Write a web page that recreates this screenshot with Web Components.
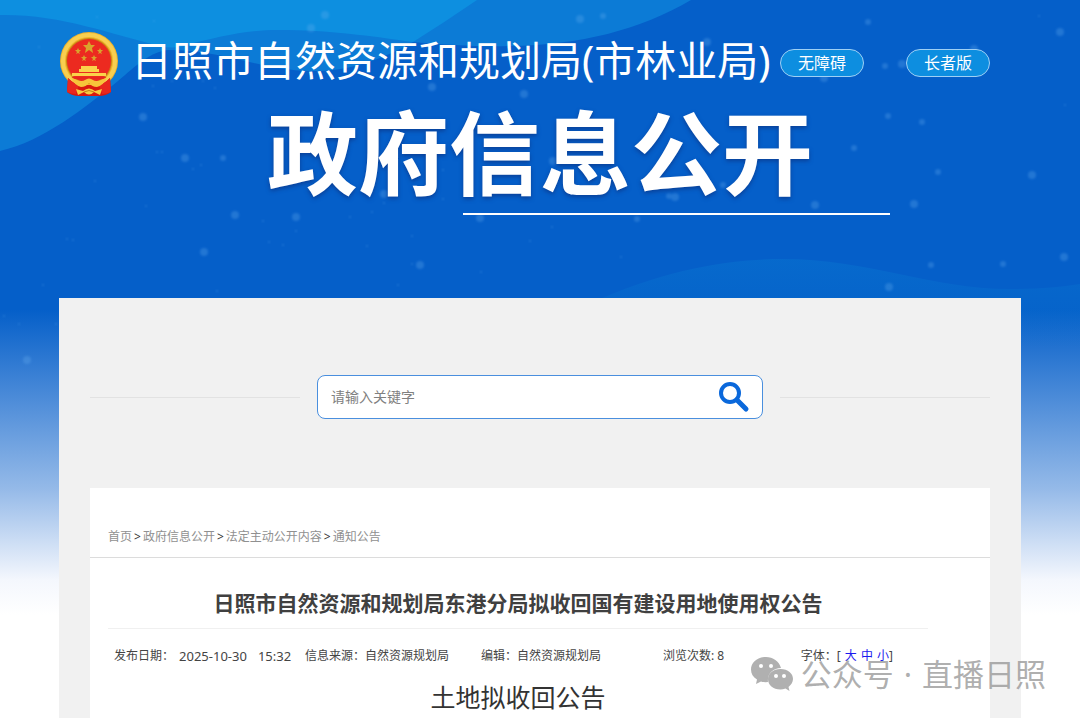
<!DOCTYPE html>
<html lang="zh-CN">
<head>
<meta charset="utf-8">
<meta name="viewport" content="width=device-width, initial-scale=1">
<title>日照市自然资源和规划局 政府信息公开</title>
<style>
  body { margin: 0; font-family: "Noto Sans", "Noto Sans CJK SC", sans-serif; color: #444; }
</style>
</head>
<body>
<gov-page>
  <site-header slot="header">
    <site-emblem slot="logo"></site-emblem>
    <span slot="name">日照市自然资源和规划局(市林业局)</span>
    <pill-button slot="tools">无障碍</pill-button>
    <pill-button slot="tools">长者版</pill-button>
    <span slot="banner">政府信息公开</span>
  </site-header>
  <search-bar></search-bar>
  <article-panel>
    <crumb-trail slot="crumbs"></crumb-trail>
    <span slot="title">日照市自然资源和规划局东港分局拟收回国有建设用地使用权公告</span>
    <article-meta slot="meta"></article-meta>
    <span slot="subtitle">土地拟收回公告</span>
  </article-panel>
  <account-mark slot="mark"></account-mark>
</gov-page>

<script>
function define(name, html, setup) {
  const template = document.createElement('template');
  template.innerHTML = '<style>:host,*{box-sizing:border-box}</style>' + html;
  customElements.define(name, class extends HTMLElement {
    constructor() {
      super();
      this.attachShadow({ mode: 'open' }).append(template.content.cloneNode(true));
      if (setup) setup(this.shadowRoot);
    }
  });
}

/* Backdrop: waves and scattered light specks, as [x, y, radius] */
const specks = [
  [185,158,4],[223,158,3],[143,117,4],[235,215,4],[296,217,4],[204,252,4],[420,265,4],[432,87,4],[524,94,4],
  [311,28,4],[325,15,4],[480,218,4],[384,194,4],[157,152,1],[162,152,1],[193,169,1],[201,165,1],[95,181,1],
  [146,206,1],[263,221,1],[296,231,1],[283,245,1],[269,242,1],[350,217,1],[372,212,1],[384,203,1],[412,236,1],
  [443,170,1],[443,199,1],[67,239,1],[73,240,1],[398,285,1],[217,291,1],[481,272,1],[43,285,1],[153,86,1],
  [215,88,1],[203,81,1],[172,81,1],[530,241,1],[367,246,1],[39,47,1],[97,17,1],[154,21,1],[412,264,1],
  [580,19,4],[603,16,3],[707,42,4],[824,78,4],[868,22,3],[1060,32,4],[974,49,4],[902,64,4],[885,66,3],
  [888,116,3],[922,122,3],[854,148,3],[938,172,3],[1032,175,4],[914,204,4],[815,205,4],[675,197,4],
  [669,196,3],[723,185,3],[637,219,3],[553,161,4],[1064,257,4],[889,287,4],[931,265,3],[1003,264,3],
  [552,227,1],[621,257,1],[1065,105,1],[1039,16,1],[27,360,4],[4,316,1],[19,324,1],[56,324,1]
];
define('wave-backdrop', `
  <style>
    :host { display: block; background: linear-gradient(#055fc9 0, #055fc9 310px, #94b9e8 488px, #f4f7fd 580px, #fff 615px); }
    svg { display: block; width: 100%; height: 400px; }
  </style>
  <svg viewBox="0 0 1080 400" preserveAspectRatio="xMidYMin slice" aria-hidden="true">
    <defs><linearGradient id="w" x1="0" y1="0" x2="0" y2="1">
      <stop offset="0" stop-color="#0a80d4" stop-opacity=".32"/><stop offset="1" stop-color="#0a80d4" stop-opacity="0"/>
    </linearGradient>
    <filter id="b"><feGaussianBlur stdDeviation=".8"/></filter></defs>
    <path fill="#0c7bd6" d="M0 0H691C640 30 580 45 510 46C480 47 450 45 413 42C385 58 350 72 310 71C260 70 225 50 168 50C150 52 137 65 118 81C84 108 44 141 0 151Z"/>
    <path fill="#0d8fe0" d="M0 0H477Q445 22 413 42C370 36 330 30 278 30C245 30 215 38 190 44Q175 50 160 46C110 34 60 14 0 15Z"/>
    <path fill="url(#w)" d="M602 298C680 265 740 259 782 259C870 259 930 289 1010 289C1040 289 1060 287 1080 284V350H602Z"/>
    <g id="s" fill="#6fb4f2" opacity=".27" filter="url(#b)"></g>
  </svg>`, root => {
  root.getElementById('s').innerHTML = specks.map(([x, y, r]) => `<circle cx="${x}" cy="${y}" r="${r}"/>`).join('');
});

define('gov-page', `
  <style>
    :host { display: grid; min-height: 100vh; position: relative; overflow: hidden; }
    wave-backdrop, .page { grid-area: 1 / 1; min-width: 0; }
    .page { position: relative; display: flex; flex-direction: column; padding: 0 59px; }
    main { flex: 1; display: flex; flex-direction: column; background: #f1f1f1; padding: 77px 31px 0; }
    .mark { position: absolute; right: 34px; top: 652px; }
  </style>
  <wave-backdrop></wave-backdrop>
  <div class="page"><slot name="header"></slot><main><slot></slot></main></div>
  <div class="mark"><slot name="mark"></slot></div>`);

define('site-header', `
  <style>
    :host { display: block; height: 298px; color: #fff; padding-top: 31px; }
    .top { display: flex; align-items: center; height: 66px; padding-right: 31px; }
    .name { flex: 1; margin: 0 0 8px 12px; font-size: 41px; line-height: 60px; font-weight: 400; white-space: nowrap; }
    .tools { display: flex; gap: 42px; margin-bottom: 2px; }
    .banner { margin: 0; text-align: center; font-size: 91px; line-height: 112px; font-weight: 700; text-shadow: 0 2px 4px #0a3f96; white-space: nowrap; }
    .rule { height: 2px; width: 427px; max-width: 50%; margin: 4px 0 0 42%; background: #fff; }
  </style>
  <header>
    <div class="top"><slot name="logo"></slot><h1 class="name"><slot name="name"></slot></h1>
      <div class="tools"><slot name="tools"></slot></div></div>
    <h2 class="banner"><slot name="banner"></slot></h2>
    <div class="rule"></div>
  </header>`);

define('pill-button', `
  <style>
    :host { display: block; }
    button { display: block; width: 84px; height: 28px; padding: 0; border: 1px solid #9fd0f5; border-radius: 14px;
      background: #0d8ee0; color: #fff; font: inherit; font-size: 16px; line-height: 26px; cursor: pointer; }
  </style>
  <button type="button"><slot></slot></button>`);

define('site-emblem', `
  <style>:host { display: block; flex: none; } svg { display: block; }</style>
  <svg width="60" height="66" viewBox="0 0 60 66" role="img" aria-label="国徽">
    <circle cx="30" cy="30" r="29" fill="#efb22b"/>
    <circle cx="30" cy="30" r="26" fill="none" stroke="#f8cf50" stroke-width="4"/>
    <circle cx="30" cy="30" r="23" fill="#c98515"/>
    <circle cx="30" cy="30" r="22" fill="#ec2a20"/>
    <g fill="#d9a42c">
      <path d="M30 10L32 14L36 14L33 17L34 22L30 19L26 22L27 17L24 14L28 14Z"/>
      <path d="M19 17l1 2h2l-2 2 1 2-2-1-2 1 1-2-2-2h2zM41 17l1 2h2l-2 2 1 2-2-1-2 1 1-2-2-2h2zM25 24l1 2h2l-2 2 1 2-2-1-2 1 1-2-2-2h2zM35 24l1 2h2l-2 2 1 2-2-1-2 1 1-2-2-2h2z"/>
    </g>
    <path d="M22 35H38V38H40V41H20V38H22ZM13 42H47V45H13Z" fill="#fbd24a"/>
    <path d="M13 46H47V48H13Z" fill="#e8271e"/>
    <path d="M9 47Q15 53 20 54L40 54Q45 53 51 47L52 61Q47 65 40 65H20Q13 65 8 61Z" fill="#d9180f"/>
    <path d="M9 47Q15 53 20 54L17 63Q12 63 8 61ZM51 47Q45 53 40 54L43 63Q48 63 52 61Z" fill="#e8271e"/>
    <path d="M12 46Q22 52 26 49Q30 46 34 49Q38 52 48 46Q45 54 38 56Q33 56 30 52Q27 56 22 56Q15 54 12 46Z" fill="#f7c43a"/>
    <path d="M17 58L24 60Q30 55 36 60L43 58L41 64L35 61Q30 66 25 61L19 64Z" fill="#f7c93f"/>
    <path d="M25 61Q30 58 35 61" fill="none" stroke="#c77d17"/>
  </svg>`);

define('search-bar', `
  <style>
    :host { display: block; }
    form { display: flex; align-items: center; gap: 17px; }
    .line { flex: 1; height: 1px; background: #e2e2e2; }
    .box { display: flex; align-items: center; width: 446px; height: 44px; padding: 0 12px 0 13px;
      background: #fff; border: 1px solid #4a8fde; border-radius: 8px; }
    input { flex: 1; min-width: 0; border: 0; outline: 0; padding: 0; background: none; font: inherit; font-size: 14px; line-height: 20px; color: #333; }
    input::placeholder { color: #808080; opacity: 1; }
    button { border: 0; padding: 0; background: none; width: 34px; height: 36px; cursor: pointer; }
    svg { display: block; }
  </style>
  <form role="search">
    <span class="line"></span>
    <div class="box">
      <input type="text" aria-label="关键字" placeholder="请输入关键字">
      <button type="button" aria-label="搜索"><svg width="34" height="34" viewBox="0 0 34 34" fill="none" stroke="#0a68db">
        <circle cx="14" cy="13" r="9" stroke-width="4"/><path d="M21 20L30 29" stroke-width="5" stroke-linecap="round"/></svg></button>
    </div>
    <span class="line"></span>
  </form>`);

define('article-panel', `
  <style>
    :host { flex: 1; display: block; margin-top: 69px; background: #fff; }
    .crumbs { padding: 40px 16px 11px; border-bottom: 1px solid #dcdcdc; }
    .body { margin: 0 62px 0 18px; }
    h1 { margin: 0; padding: 30px 0 10px; border-bottom: 1px solid #f0f0f0; text-align: center; font-size: 21px; line-height: 30px; font-weight: 700; color: #404040; }
    h2 { margin: 0; text-align: center; font-size: 25px; line-height: 36px; font-weight: 400; color: #333; }
  </style>
  <div class="crumbs"><slot name="crumbs"></slot></div>
  <article class="body">
    <h1><slot name="title"></slot></h1>
    <slot name="meta"></slot>
    <h2><slot name="subtitle"></slot></h2>
  </article>`);

define('crumb-trail', `
  <style>
    :host { display: block; font-size: 12px; line-height: 18px; color: #333; }
    nav { display: flex; }
    a { color: #909090; text-decoration: none; padding: 0 2px; }
  </style>
  <nav aria-label="当前位置"><a href="#">首页</a><span>&gt;</span><a href="#">政府信息公开</a><span>&gt;</span><a href="#">法定主动公开内容</a><span>&gt;</span><a href="#">通知公告</a></nav>`);

define('article-meta', `
  <style>
    :host { display: block; padding: 17px 35px 13px 6px; font-size: 12px; line-height: 20px; color: #444; }
    .row { display: flex; align-items: center; white-space: nowrap; }
    .date { display: flex; width: 191px; }
    time { font-size: 13px; margin-left: 5px; }
    time + time { margin-left: 11px; }
    .source { width: 176px; }
    .editor { width: 182px; }
    .size { margin-left: auto; }
    a { color: #1a1aee; text-decoration: none; padding-left: 1px; }
  </style>
  <div class="row">
    <span class="date">发布日期：<time>2025-10-30</time><time>15:32</time></span>
    <span class="source">信息来源：自然资源规划局</span>
    <span class="editor">编辑：自然资源规划局</span>
    <span>浏览次数: 8</span>
    <span class="size">字体：[ <a href="#">大</a> <a href="#">中</a> <a href="#">小</a>]</span>
  </div>`);

define('account-mark', `
  <style>
    :host { display: flex; align-items: center; gap: 8px; font-size: 31px; line-height: 44px; color: rgba(140,140,140,.7); white-space: nowrap; pointer-events: none; }
    .t { display: flex; gap: 10px; }
    svg { display: block; }
  </style>
  <svg width="42" height="34" viewBox="0 0 42 34" aria-hidden="true">
    <path fill="#b0b0b0" d="M15 0C6 0 0 6 0 12.500C0 17 2 20 6 22.500L5 27L10 24.500Q13 25.500 17 25C16 17 22 11 30 11C28 4 22 0 15 0Z"/>
    <path fill="#b0b0b0" d="M29.500 12C22 12 17 16.500 17 22C17 28 22 32.500 29.500 32.500Q32 32.500 34.500 31.500L38.500 34L37.500 30C40 28 42 25 42 22C42 16.500 37 12 29.500 12Z"/>
    <g fill="#fff"><circle cx="10" cy="9" r="2"/><circle cx="20" cy="9" r="2"/><circle cx="25" cy="19" r="2"/><circle cx="33" cy="19" r="2"/></g>
  </svg>
  <span class="t"><span>公众号</span><span>·</span><span>直播日照</span></span>`);
</script>
</body>
</html>
